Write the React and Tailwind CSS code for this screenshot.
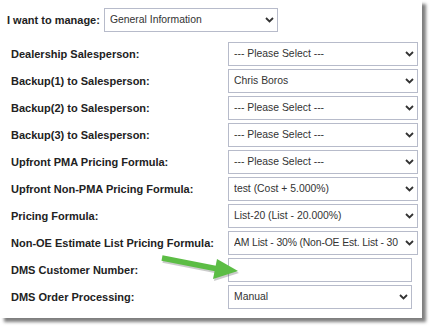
import React from 'react';

const rows = [
  { label: 'Dealership Salesperson:', value: '--- Please Select ---' },
  { label: 'Backup(1) to Salesperson:', value: 'Chris Boros' },
  { label: 'Backup(2) to Salesperson:', value: '--- Please Select ---' },
  { label: 'Backup(3) to Salesperson:', value: '--- Please Select ---' },
  { label: 'Upfront PMA Pricing Formula:', value: '--- Please Select ---' },
  { label: 'Upfront Non-PMA Pricing Formula:', value: 'test (Cost + 5.000%)' },
  { label: 'Pricing Formula:', value: 'List-20 (List - 20.000%)' },
  { label: 'Non-OE Estimate List Pricing Formula:', value: 'AM List - 30% (Non-OE Est. List - 30', tight: true },
  { label: 'DMS Customer Number:', input: true },
  { label: 'DMS Order Processing:', value: 'Manual', narrow: true },
];

const Chevron = () => (
  <svg width="9" height="6" viewBox="0 0 9 6" className="shrink-0">
    <path d="M1 1 L4.5 4.5 L8 1" fill="none" stroke="#333" strokeWidth="1.8" />
  </svg>
);

// fake select box
const SelectBox = ({ value, className, tight }) => (
  <div className={`h-[24px] border border-[#b7bbca] bg-white flex items-center pl-[5px] pr-[3px] gap-[1px] ${className}`}>
    <span className={`flex-1 overflow-hidden whitespace-nowrap text-[10.4px] text-[#333] ${tight ? 'tracking-[-0.15px]' : ''}`}>{value}</span>
    <Chevron />
  </div>
);

export default function App() {
  return (
    <div className="w-[436px] h-[334px] bg-white relative" style={{ fontFamily: '"Liberation Sans", Arial, sans-serif' }}>
      <div className="w-[422px] h-[318px] bg-white shadow-[4px_4px_3px_rgba(0,0,0,0.5)] pt-[8px]">
        {/* manage selector */}
        <div className="flex items-center pl-[7px] gap-[4px]">
          <span className="text-[11px] font-bold text-[#222]">I want to manage:</span>
          <SelectBox value="General Information" className="w-[174px]" />
        </div>

        <div className="flex flex-col gap-[3px] mt-[10px] pl-[11px]">
          {rows.map((r) => (
            <div key={r.label} className="flex items-center">
              <span className="w-[217px] text-[11px] font-bold text-[#222]">{r.label}</span>
              {r.input ? (
                <div className="h-[24px] w-[184px] border border-[#b7bbca] bg-white" />
              ) : (
                <SelectBox value={r.value} tight={r.tight} className={r.narrow ? 'w-[184px]' : 'w-[190px]'} />
              )}
            </div>
          ))}
        </div>
      </div>

      {/* green arrow */}
      <svg className="absolute left-[158px] top-[252px]" width="84" height="32" viewBox="0 0 84 32">
        <g opacity="0.25" transform="translate(1,2)">
          <line x1="4" y1="6" x2="60" y2="17" stroke="#333" strokeWidth="5.5" />
          <polygon points="59,7 80,19 55,27" fill="#333" />
        </g>
        <line x1="4" y1="6" x2="60" y2="17" stroke="#5cbd45" strokeWidth="5.5" />
        <polygon points="59,7 80,19 55,27" fill="#5cbd45" />
      </svg>
    </div>
  );
}
